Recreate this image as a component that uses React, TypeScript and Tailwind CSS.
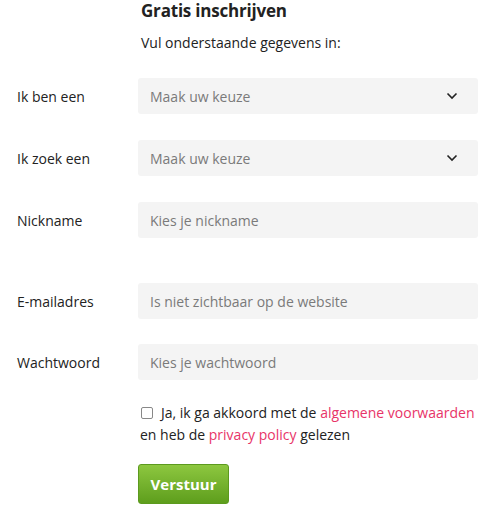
import React from 'react';

const rows = [
  { label: 'Ik ben een', placeholder: 'Maak uw keuze', select: true, mt: 'mt-[24px]' },
  { label: 'Ik zoek een', placeholder: 'Maak uw keuze', select: true, mt: 'mt-[26px]' },
  { label: 'Nickname', placeholder: 'Kies je nickname', select: false, mt: 'mt-[26px]' },
  { label: 'E-mailadres', placeholder: 'Is niet zichtbaar op de website', select: false, mt: 'mt-[45px]' },
  { label: 'Wachtwoord', placeholder: 'Kies je wachtwoord', select: false, mt: 'mt-[25px]' },
];

function Chevron() {
  return (
    <svg width="12" height="8" viewBox="0 0 12 8" fill="none">
      <path d="M1.5 1.5 L6 6 L10.5 1.5" stroke="#222" strokeWidth="1.6" />
    </svg>
  );
}

export default function App() {
  return (
    <div className="w-[483px] h-[512px] bg-white text-[#222] font-['Open_Sans',sans-serif] overflow-hidden">
      <div className="pl-[17px]">
        {/* Heading */}
        <div className="ml-[124px]">
          <h1 className="text-[17px] font-bold leading-[21px] tracking-[-0.2px]">Gratis inschrijven</h1>
          <p className="mt-[11px] text-[14px] leading-[22px]">Vul onderstaande gegevens in:</p>
        </div>

        {/* Fields */}
        {rows.map((r) => (
          <div key={r.label} className={`flex items-center ${r.mt}`}>
            <label className="w-[121px] text-[14px]">{r.label}</label>
            <div className="w-[340px] h-[36px] bg-[#f4f4f4] rounded-[3px] flex items-center justify-between pl-[12px] pr-[20px]">
              <span className="text-[14px] text-[#7a7a7a]">{r.placeholder}</span>
              {r.select && <Chevron />}
            </div>
          </div>
        ))}

        {/* Terms */}
        <div className="ml-[121px] mt-[22px] text-[14px] leading-[22px]">
          <div className="flex items-center">
            <span className="inline-block w-[12px] h-[12px] border border-[#888] rounded-[2px] ml-[3px] mr-[8px]" />
            <span>
              Ja, ik ga akkoord met de <a className="text-[#e83468]">algemene voorwaarden</a>
            </span>
          </div>
          <div className="pl-[2px]">
            en heb de <a className="text-[#e83468]">privacy policy</a> gelezen
          </div>
          <button className="mt-[18px] w-[91px] h-[40px] rounded-[3px] border border-[#5c9a1e] bg-gradient-to-b from-[#8dc73f] to-[#5e9e1c] text-white font-bold text-[15px]">
            Verstuur
          </button>
        </div>
      </div>
    </div>
  );
}
